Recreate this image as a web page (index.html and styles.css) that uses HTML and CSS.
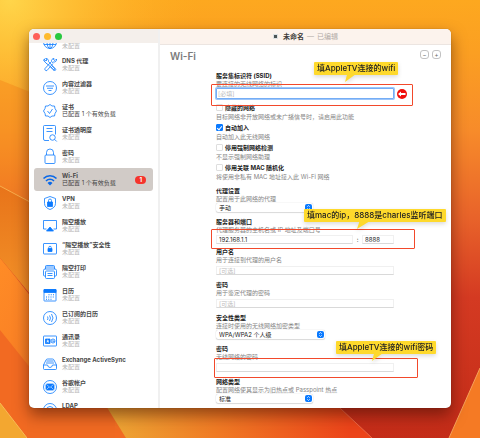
FILE: index.html
```html
<!DOCTYPE html>
<html lang="zh-CN">
<head>
<meta charset="utf-8">
<title>未命名</title>
<link rel="stylesheet" href="styles.css">
</head>
<body>
<svg class="wallpaper" viewBox="0 0 480 438" preserveAspectRatio="none" aria-hidden="true">
  <defs>
    <linearGradient id="base" x1="0" y1="0" x2="0" y2="1">
      <stop offset="0" stop-color="#fda81f"/><stop offset=".12" stop-color="#fb9f22"/><stop offset=".3" stop-color="#f78b2a"/><stop offset=".5" stop-color="#e8622a"/><stop offset=".68" stop-color="#d43a22"/><stop offset="1" stop-color="#c42c18"/>
    </linearGradient>
    <radialGradient id="glow" gradientUnits="userSpaceOnUse" cx="10" cy="0" r="190">
      <stop offset="0" stop-color="#ffd54a"/><stop offset="1" stop-color="#ffb020" stop-opacity="0"/>
    </radialGradient>
    <linearGradient id="left" x1="0" y1="0" x2="0" y2="1">
      <stop offset="0" stop-color="#e8741a"/><stop offset="1" stop-color="#f59a2c"/>
    </linearGradient>
    <linearGradient id="lower" x1="0" y1="0" x2="1" y2="1">
      <stop offset="0" stop-color="#ff8c26"/><stop offset="1" stop-color="#f06a22"/>
    </linearGradient>
    <linearGradient id="floor" gradientUnits="userSpaceOnUse" x1="110" y1="0" x2="350" y2="0">
      <stop offset="0" stop-color="#eda634"/><stop offset=".45" stop-color="#f07a24"/><stop offset="1" stop-color="#ec441a"/>
    </linearGradient>
  </defs>
  <rect width="480" height="438" fill="url(#base)"/>
  <rect width="480" height="438" fill="url(#glow)"/>
  <path d="M0 80L100 120V300L0 186z" fill="#f58a1c" opacity=".5"/>
  <path d="M0 186L60 218V330L0 258z" fill="url(#left)"/>
  <path d="M0 186L30 202" stroke="#f8ad4c" fill="none"/>
  <path d="M0 258Q60 330 130 438H0z" fill="url(#lower)"/>
  <path d="M0 330L40 380L130 438H0z" fill="#f26a22"/>
  <path d="M0 403L27 438H0z" fill="#f3a730"/>
  <path d="M0 403L27 438" stroke="#f8bb55" fill="none"/>
  <path d="M27 400H115V438H27z" fill="#f06a22"/>
  <path d="M90 380L126 438H372L310 380z" fill="url(#floor)"/>
  <path d="M340 408L372 438" stroke="#ee6a46" fill="none"/>
  <path d="M480 368L449 438H480z" fill="#f57a24"/>
  <path d="M480 368L449 438" stroke="#f5a25a" fill="none"/>
</svg>

<svg class="symbols" aria-hidden="true">
  <symbol id="updown" viewBox="0 0 14 14"><path d="M4.5 5.5L7 3l2.5 2.5M4.500 8.500L7 11l2.500-2.500" fill="none" stroke="#fff" stroke-width="1.500"/></symbol>
</svg>

<div class="window">
  <aside class="sidebar">
    <div class="lights"><i class="light light--close"></i><i class="light light--min"></i><i class="light light--zoom"></i></div>
    <ul class="payloads">
      <li class="payload payload--cut">
        <svg class="icon" viewBox="0 0 28 28"><circle cx="14" cy="14" r="13"/><ellipse cx="14" cy="14" rx="6" ry="13"/><path d="M14 1v26M2 9h24M2 19h24"/></svg>
        <div class="label"><small>未配置</small></div>
      </li>
      <li class="payload">
        <svg class="icon" viewBox="0 0 28 28"><path d="M9 13L4 8a4 4 0 0 1-2-5l4 3 2-2-2-3a5 5 0 0 1 5 6l12 13a2 2 0 0 1-3 3L8 11M18 9l3-1a5 5 0 0 0 6-6l-3 3-3-2 1-2a5 5 0 0 0-5 6L4 21a3 3 0 0 0 4 4L20 11M16 18l7 8 3-3-8-7M1 4l4-3"/></svg>
        <div class="label"><b>DNS 代理</b><small>未配置</small></div>
      </li>
      <li class="payload">
        <svg class="icon" viewBox="0 0 28 28"><circle cx="14" cy="14" r="13"/><path d="M6 10h16M8 14.500h12M11 19h6"/></svg>
        <div class="label"><b>内容过滤器</b><small>未配置</small></div>
      </li>
      <li class="payload payload--configured">
        <svg class="icon" viewBox="0 0 28 28"><path d="M14 1l4 3 5 0 1 5 3 5-3 5-1 5-5 0-4 3-4-3-5 0-1-5-3-5 3-5 1-5 5 0zM9 14l4 5 6-9"/></svg>
        <div class="label"><b>证书</b><small>已配置 1 个有效负载</small></div>
      </li>
      <li class="payload">
        <svg class="icon icon--tall" viewBox="0 0 28 34"><path d="M12 31H4a3 3 0 0 1-3-3V3a2 2 0 0 1 2-2h20a2 2 0 0 1 2 2v16M7 7h12M7 13h12M23.500 29l4 4"/><circle cx="19" cy="25" r="5.500"/></svg>
        <div class="label"><b>证书透明度</b><small>未配置</small></div>
      </li>
      <li class="payload">
        <svg class="icon icon--tall" viewBox="0 0 28 34"><rect x="4" y="14" width="20" height="17" rx="2"/><path d="M7 14V9a7 7 0 0 1 14 0v5"/></svg>
        <div class="label"><b>密码</b><small>未配置</small></div>
      </li>
      <li class="payload payload--configured payload--selected">
        <svg class="icon" viewBox="0 0 28 28"><g stroke-width="3.200" stroke="#0a68e8"><path d="M1 11a18 18 0 0 1 26 0M6 16a11 11 0 0 1 16 0"/></g><path d="M9 20a7 7 0 0 1 10 0l-5 5z" fill="#0a68e8" stroke="none"/></svg>
        <div class="label"><b>Wi-Fi</b><small>已配置 1 个有效负载</small></div>
        <span class="badge">1</span>
      </li>
      <li class="payload">
        <svg class="icon" viewBox="0 0 28 28"><path d="M14 1l11 4v10c0 6-5 10-11 12C8 25 3 21 3 15V5z"/><path d="M9 12h10v9H9z" fill="#0a7aff"/><path d="M11 12V9a3 3 0 0 1 6 0v3"/></svg>
        <div class="label"><b>VPN</b><small>未配置</small></div>
      </li>
      <li class="payload">
        <svg class="icon" viewBox="0 0 28 28"><path d="M7 20H1V3h26v17h-6"/><path d="M14 16l7 8H7z" fill="#0a7aff"/></svg>
        <div class="label"><b>隔空播放</b><small>未配置</small></div>
      </li>
      <li class="payload">
        <svg class="icon" viewBox="0 0 28 28"><rect x="1" y="3" width="26" height="21" rx="1"/><path d="M10 13h8v6h-8z" fill="#0a7aff"/><path d="M11.500 13v-2a2.500 2.500 0 0 1 5 0v2"/></svg>
        <div class="label"><b>“隔空播放”安全性</b><small>未配置</small></div>
      </li>
      <li class="payload">
        <svg class="icon" viewBox="0 0 28 28"><path d="M5 22H3a2 2 0 0 1-2-2v-9a3 3 0 0 1 3-3h20a3 3 0 0 1 3 3v9a2 2 0 0 1-2 2h-2M5 8V3a2 2 0 0 1 2-2h14a2 2 0 0 1 2 2v5M5 4h18M9 17h10M9 21h10"/><rect x="5" y="12" width="18" height="15" rx="2"/></svg>
        <div class="label"><b>隔空打印</b><small>未配置</small></div>
      </li>
      <li class="payload">
        <svg class="icon" viewBox="0 0 28 28"><rect x="2" y="3" width="24" height="23" rx="1"/><path d="M2 3h24v6H2z" fill="#0a7aff"/><path d="M11 13.500h12M6 18h17M6 22.500h13" stroke-width="2" stroke-dasharray="2 2.500"/></svg>
        <div class="label"><b>日历</b><small>未配置</small></div>
      </li>
      <li class="payload">
        <svg class="icon" viewBox="0 0 28 28"><circle cx="14" cy="14" r="13"/><path d="M9 11q2 3 0 7M13 9q4 5 0 11M17 6q6 8 0 16"/></svg>
        <div class="label"><b>已订阅的日历</b><small>未配置</small></div>
      </li>
      <li class="payload">
        <svg class="icon" viewBox="0 0 28 28"><rect x="1" y="4" width="26" height="20" rx="1"/><path d="M5 10h9v9H5z" fill="#0a7aff"/><path d="M8 17v-2h3v2" stroke="#fff"/><circle cx="9.500" cy="13" r="1" stroke="#fff"/><circle cx="20" cy="14" r="4"/><path d="M18 14h4v2"/></svg>
        <div class="label"><b>通讯录</b><small>未配置</small></div>
      </li>
      <li class="payload">
        <svg class="icon" viewBox="0 0 28 28"><path d="M1 16L6 6q1-2 3-2h10q2 0 3 2l5 10v7a2 2 0 0 1-2 2H3a2 2 0 0 1-2-2zM1 16h8q1 5 5 5t5-5h8M6 12h16M7 8h14"/></svg>
        <div class="label"><b>Exchange ActiveSync</b><small>未配置</small></div>
      </li>
      <li class="payload">
        <svg class="icon" viewBox="0 0 28 28"><circle cx="14" cy="14" r="13"/><rect x="6" y="8" width="16" height="12" rx="2" fill="#0a7aff"/><path d="M7 9l7 6 7-6M7 19l5-5M21 19l-5-5" stroke="#fff" stroke-width="1"/></svg>
        <div class="label"><b>谷歌帐户</b><small>未配置</small></div>
      </li>
      <li class="payload">
        <svg class="icon" viewBox="0 0 28 28"><circle cx="14" cy="14" r="13"/><circle cx="14" cy="14" r="7"/><path d="M11 15a3 3 0 1 1 6-1v4"/></svg>
        <div class="label"><b>LDAP</b></div>
      </li>
    </ul>
  </aside>

  <main class="panel">
    <header class="titlebar"><i class="doc"></i><strong>未命名</strong><span>—</span><span>已编辑</span></header>
    <div class="content">
      <div class="heading">
        <h1>Wi-Fi</h1>
        <div class="tools"><button type="button" aria-label="移除">−</button><button type="button" aria-label="添加">+</button></div>
      </div>
      <form class="form">
        <div class="field">
          <label for="ssid">服务集标识符 (SSID)</label>
          <p>要连接的无线网络的标识</p>
          <input class="text text--focus" id="ssid" type="text" placeholder="[必填]">
          <svg class="required" viewBox="0 0 20 20"><circle cx="10" cy="10" r="10" fill="#f0100c"/><path d="M2 10l6-5v3h9v4H8v3z" fill="#fff"/></svg>
          <i class="mark mark--ssid"></i>
          <div class="note note--ssid">填AppleTV连接的wifi</div>
        </div>
        <div class="checks">
          <div><label><input type="checkbox">隐藏的网络</label><p>目标网络非开放网络或未广播信号时，请启用此功能</p></div>
          <div><label><input type="checkbox" checked>自动加入</label><p>自动加入此无线网络</p></div>
          <div><label><input type="checkbox">停用强制网络检测</label><p>不显示强制网络助理</p></div>
          <div><label><input type="checkbox">停用关联 MAC 随机化</label><p>将使用非私有 MAC 地址接入此 Wi-Fi 网络</p></div>
        </div>
        <div class="field">
          <label for="proxy">代理设置</label>
          <p>配置用于此网络的代理</p>
          <div class="select"><select id="proxy"><option>手动</option></select><svg><use href="#updown"/></svg></div>
        </div>
        <div class="field">
          <label for="server">服务器和端口</label>
          <p>代理服务器的主机名或 IP 地址及端口号</p>
          <div class="pair"><input class="text" id="server" type="text" value="192.168.1.1"><span>:</span><input class="text" type="text" value="8888" aria-label="端口"></div>
          <i class="mark mark--server"></i>
          <div class="note note--server">填mac的ip，8888是charles监听端口</div>
        </div>
        <div class="field">
          <label for="user">用户名</label>
          <p>用于连接到代理的用户名</p>
          <input class="text text--low" id="user" type="text" placeholder="[可选]">
        </div>
        <div class="field">
          <label for="proxypass">密码</label>
          <p>用于鉴定代理的密码</p>
          <input class="text text--low" id="proxypass" type="password" placeholder="[可选]">
        </div>
        <div class="field">
          <label for="security">安全性类型</label>
          <p>连接时使用的无线网络加密类型</p>
          <div class="select select--wide"><select id="security"><option>WPA/WPA2 个人级</option></select><svg><use href="#updown"/></svg></div>
        </div>
        <div class="field">
          <label for="wifipass">密码</label>
          <p>无线网络的密码</p>
          <input class="text text--low" id="wifipass" type="password">
          <i class="mark mark--pass"></i>
          <div class="note note--pass">填AppleTV连接的wifi密码</div>
        </div>
        <div class="field">
          <label for="nettype">网络类型</label>
          <p>配置网络使其显示为旧热点或 Passpoint 热点</p>
          <div class="select"><select id="nettype"><option>标准</option></select><svg><use href="#updown"/></svg></div>
        </div>
      </form>
    </div>
  </main>
</div>
</body>
</html>
```

FILE: styles.css
```css
* { box-sizing: border-box; }

body {
  margin: 0;
  height: 100vh;
  padding: 29px 29px 30px;
  display: flex;
  overflow: hidden;
  background: #f08020;
  font: 6px/8px Inter, "Noto Sans CJK SC", sans-serif;
  color: #222;
}

h1, p, ul { margin: 0; padding: 0; }
input, select, button { font: inherit; color: inherit; }

.wallpaper { position: absolute; inset: 0; width: 100%; height: 100%; }
.symbols { position: absolute; width: 0; height: 0; }

.window {
  position: relative;
  flex: 1;
  display: grid;
  grid-template-columns: 129px 1fr;
  overflow: hidden;
  border-radius: 5px;
  background: #fff;
  box-shadow: 0 0 1px rgba(0, 0, 0, .4), 0 7px 15px rgba(50, 10, 0, .5);
}

/* Sidebar */
.sidebar { min-height: 0; overflow: hidden; }
.lights {
  display: flex;
  align-items: center;
  gap: 4px;
  height: 14px;
  padding: 1px 4px 0;
  background: #f4efeb;
}
.light { width: 7px; height: 7px; border-radius: 50%; }
.light--close { background: #fe5f57; }
.light--min { background: #febb2e; }
.light--zoom { background: #28c840; }

.payloads { list-style: none; padding: 0 5px; }
.payload {
  display: flex;
  align-items: center;
  height: 23px;
  padding: 0 7px 0 9px;
  gap: 5px;
  border-radius: 3px;
}
.payload--cut { height: 10px; align-items: flex-end; overflow: hidden; padding-bottom: 4px; }
.payload--selected { background: #d1cbc7; }
.icon {
  flex: none;
  width: 14px;
  height: 14px;
  fill: none;
  stroke: #0a7aff;
  stroke-width: 1.6;
  overflow: visible;
}
.icon--tall { height: 17px; }
.label { flex: 1; min-height: 16px; padding-bottom: 2px; white-space: nowrap; line-height: 7px; }
.payload--cut .label { min-height: 0; padding-bottom: 0; }
.label b { display: block; color: #484848; }
.label small { display: block; font-size: 6px; color: #b4b4b4; }
.payload--configured small { color: #3f3f3f; }
.badge {
  padding: 0 4px;
  border-radius: 4px;
  background: #f5342c;
  color: #fff;
  font-weight: 700;
}

/* Main panel */
.panel { min-width: 0; min-height: 0; overflow: hidden; border-left: 2px solid #f0f0f0; }
.titlebar {
  display: flex;
  align-items: center;
  justify-content: center;
  gap: 3px;
  height: 16px;
  border-bottom: 1px solid #ece5e1;
  background: #fcf3ed;
  color: #b3aca8;
  font-size: 7px;
}
.titlebar strong { color: #403c3a; }
.doc { width: 5px; height: 5px; margin-right: 2px; border: 1px solid #dde2e4; background: #4a5457; }
.content { padding: 5px 10px 0; }
.heading { display: flex; justify-content: space-between; align-items: flex-start; height: 21px; }
h1 { font-size: 10px; font-weight: 600; line-height: 12px; color: #7b7b7b; }
.tools { display: flex; gap: 3px; }
.tools button {
  width: 9px;
  height: 9px;
  padding: 0;
  border: 1px solid #c2c2c2;
  border-radius: 3px;
  background: #fff;
  color: #666;
  line-height: 7px;
}

.form {
  display: flex;
  flex-direction: column;
  gap: 5px;
  max-width: 178px;
  margin-left: 46px;
}
.field { position: relative; }
.field label, .checks label { display: flex; align-items: center; height: 9px; font-weight: 700; }
.form p { height: 8px; color: #858585; white-space: nowrap; }

.text {
  display: block;
  width: 100%;
  height: 9px;
  padding: 0 2px;
  border: 1px solid #f0f0f0;
  border-bottom-color: #d9d9d9;
  background: #fff;
  outline: none;
  line-height: 7px;
}
.text::placeholder { color: #bcbcbc; }
.text--low { margin-top: 2px; }
.text--focus { height: 11px; border: 0; border-radius: 1px; box-shadow: inset 0 0 0 1px #75adf5, 0 0 0 1px #9cc5fa; }
.required { position: absolute; right: -13px; top: 18px; width: 10px; height: 10px; }

.checks { display: grid; gap: 2px; margin-top: -1px; }
.checks label { gap: 2px; }
.checks p { height: 9px; line-height: 9px; }
.checks input {
  appearance: none;
  flex: none;
  width: 7px;
  height: 7px;
  margin: 0;
  border: 1px solid #dedede;
  border-radius: 1px;
  background: #fff;
}
.checks input:checked { border-color: #0a7aff; background: #0a7aff; }
.checks input:checked::after {
  content: "";
  display: block;
  width: 2px;
  height: 4px;
  margin: 0 auto;
  border: solid #fff;
  border-width: 0 1px 1px 0;
  transform: rotate(40deg);
}

.select { position: relative; width: 97px; }
.select--wide { width: 109px; }
.select select {
  appearance: none;
  display: block;
  width: 100%;
  height: 9px;
  padding: 0 3px;
  border: 0;
  border-radius: 2px;
  background: #fff;
  box-shadow: 0 0 1px #bbb, 0 1px 1px #ddd;
  line-height: 9px;
}
.select svg {
  position: absolute;
  right: 1px;
  top: 1px;
  width: 7px;
  height: 7px;
  border-radius: 2px;
  background: #0a7aff;
}

.pair { display: grid; grid-template-columns: 1fr 9px 32px; align-items: center; margin: 1px 0 -2px; text-align: center; }

/* Annotations over the form */
.mark { position: absolute; border: 1px solid #f2492b; border-radius: 1px; }
.mark--ssid { left: -5px; top: 13px; width: 202px; height: 22px; }
.mark--server { left: -5px; top: 12px; width: 204px; height: 20px; }
.mark--pass { left: -2px; top: 14px; width: 204px; height: 20px; }
.note {
  position: absolute;
  z-index: 1;
  height: 13px;
  padding: 0 3px;
  border-radius: 1px;
  background: #fed92c;
  color: #222;
  font-size: 8px;
  font-weight: 500;
  line-height: 13px;
  white-space: nowrap;
  filter: drop-shadow(0 2px 2px rgba(0, 0, 0, .14));
}
.note::after {
  content: "";
  position: absolute;
  top: 12px;
  left: 31px;
  width: 11px;
  height: 8px;
  background: #fed92c;
  clip-path: polygon(20% 0, 100% 0, 0 100%);
}
.note--ssid { left: 98px; top: -9px; }
.note--server { left: 88px; top: -8px; }
.note--server::after { left: 53px; width: 13px; }
.note--pass { left: 120px; top: -3px; }
.note--pass::after { left: 36px; }
```
